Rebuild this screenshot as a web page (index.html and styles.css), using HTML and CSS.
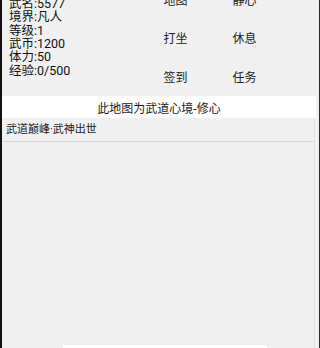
FILE: index.html
```html
<!DOCTYPE html>
<html lang="zh">
<head>
<meta charset="utf-8">
<link rel="stylesheet" href="styles.css">
</head>
<body>
<div class="page">
  <div class="top">
    <div class="stats">
      <div>武名:5577</div>
      <div>境界:凡人</div>
      <div>等级:1</div>
      <div>武币:1200</div>
      <div>体力:50</div>
      <div>经验:0/500</div>
    </div>
    <div class="menu">
      <div class="btn">地图</div>
      <div class="btn">静心</div>
      <div class="btn">打坐</div>
      <div class="btn">休息</div>
      <div class="btn">签到</div>
      <div class="btn">任务</div>
    </div>
  </div>
  <div class="banner">此地图为武道心境-修心</div>
  <div class="list">
    <div class="item">武道巅峰·武神出世</div>
  </div>
  <div class="bottom-bar"></div>
</div>
</body>
</html>
```
FILE: styles.css
```css
html, body {
  margin: 0;
  padding: 0;
  height: 100%;
}
body {
  background: #111;
  font-family: Roboto, "Noto Sans CJK SC", sans-serif;
  color: #1a1a1a;
  font-size: 12px;
  overflow: hidden;
}
.page {
  height: 348px;
  margin-left: 2px;
  border-right: 1px solid #2a2a2a;
  box-sizing: border-box;
  background: #f0f0f0;
  display: flex;
  flex-direction: column;
  position: relative;
}
.top {
  height: 96px;
  overflow: hidden;
  display: flex;
}
.stats {
  box-sizing: border-box;
  width: 139px;
  padding-left: 7px;
  margin-top: -3px;
  line-height: 13.35px;
  font-size: 12.5px;
  color: #111;
}
.menu {
  flex: 1;
  margin-top: -20px;
  display: grid;
  grid-template-columns: 69px 69px;
  grid-template-rows: repeat(3, 38.67px);
}
.btn {
  display: flex;
  align-items: center;
  justify-content: center;
  font-size: 12px;
  color: #222;
}
.banner {
  height: 22px;
  background: #fff;
  display: flex;
  align-items: center;
  justify-content: center;
  font-size: 12px;
  margin-right: 3px;
}
.list {
  flex: 1;
  border-right: 1px solid #e2e2e2;
  margin-right: 4px;
}
.item {
  height: 23px;
  line-height: 23px;
  padding-left: 4px;
  font-size: 11px;
  border-bottom: 1px solid #d8d8d8;
}
.bottom-bar {
  position: absolute;
  left: 61px;
  bottom: 0;
  width: 204px;
  height: 3px;
  background: #fff;
}
```
